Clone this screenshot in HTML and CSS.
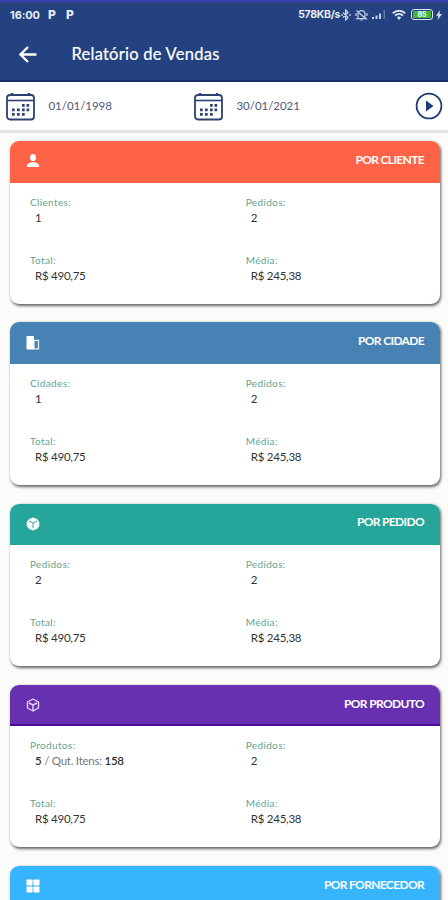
FILE: index.html
```html
<!DOCTYPE html>
<html lang="pt-BR">
<head>
	<meta charset="utf-8">
	<title>Relatório de Vendas</title>
	<link rel="stylesheet" href="styles.css">
</head>
<body>

	<header class="topbar">
		<div class="status">
			<span class="clock">16:00</span>
			<span class="notif">P</span>
			<span class="notif">P</span>
			<span class="speed">578KB/s</span>
			<svg class="st-bt" width="10" height="12" viewBox="0 0 10 12" fill="none" stroke="#c5d0e6" stroke-width="1.3"><path d="M2 3.5l5 5L4.7 11V1L7 3.5l-5 5M1 5v2M9 5v2"/></svg>
			<svg class="st-mute" width="13" height="12" viewBox="0 0 13 12" fill="none" stroke="#c5d0e6" stroke-width="1.2"><path d="M3 9V5.2a3.5 3.5 0 0 1 7 0V9l1 .7H2zM5.5 11h2M1.5 1.5l10 9M1 4v3M12 4v3"/></svg>
			<svg class="st-signal" width="14" height="11" viewBox="0 0 14 11" fill="#c5d0e6"><path d="M0 8h2v2H0zM3.5 6.5h2V10h-2zM7 4.5h2V10H7z"/><path d="M11.5 1H13v9h-1.5z" opacity=".4"/></svg>
			<svg class="st-wifi" width="14" height="12" viewBox="0 0 14 12" fill="none" stroke="#dce4f2" stroke-width="1.9"><path d="M.8 4.2a9 9 0 0 1 12.4 0M3 6.6a6 6 0 0 1 8 0"/><path d="M7 11L4.8 8.6a3.3 3.3 0 0 1 4.4 0z" fill="#dce4f2" stroke="none"/></svg>
			<span class="battery"><span class="level">85</span></span>
			<svg class="st-bolt" width="6" height="10" viewBox="0 0 6 10" fill="#dce4f2"><path d="M4.2 0L0 5.8h2.4L1.5 10 6 4H3.4z"/></svg>
		</div>
		<div class="titlebar">
			<svg width="18" height="17" viewBox="0 0 18 17" fill="none" stroke="#fff" stroke-width="2.3"><path d="M17.5 8.5H2M9 1L1.5 8.5 9 16"/></svg>
			<h1>Relatório de Vendas</h1>
		</div>
	</header>

	<svg class="defs" width="0" height="0">
		<symbol id="calendar" viewBox="0 0 29 29">
			<rect x="1" y="3" width="27" height="24.5" rx="3" fill="none" stroke="#2d4270" stroke-width="1.8"/>
			<path d="M1 8.5h27" stroke="#2d4270" stroke-width="1.6"/>
			<path d="M6 1v3M23 1v3" stroke="#2d4270" stroke-width="2.4"/>
			<path d="M16 12h2.7v2.7H16zM20.5 12h2.7v2.7h-2.7zM6 16.5h2.7v2.7H6zM11 16.5h2.7v2.7H11zM16 16.5h2.7v2.7H16zM20.5 16.5h2.7v2.7h-2.7zM6 21h2.7v2.7H6zM11 21h2.7v2.7H11zM16 21h2.7v2.7H16z" fill="#2d4270"/>
		</symbol>
	</svg>

	<div class="filter">
		<div class="date">
			<svg width="29" height="29"><use href="#calendar"/></svg>
			<span>01/01/1998</span>
		</div>
		<div class="date">
			<svg width="29" height="29"><use href="#calendar"/></svg>
			<span>30/01/2021</span>
		</div>
		<svg class="play" width="28" height="28" viewBox="0 0 28 28"><circle cx="14" cy="14" r="12.4" fill="none" stroke="#1d3a72" stroke-width="1.8"/><path d="M11 8.5l7.5 5.5-7.5 5.5z" fill="#1d3a72"/></svg>
	</div>

	<main class="cards">
		<section class="card">
			<div class="head cliente">
				<svg width="14" height="14" viewBox="0 0 14 14" fill="#fff"><ellipse cx="7" cy="3.6" rx="3" ry="3.5"/><path d="M1 13v-1.5c0-2 3-3.3 6-3.3s6 1.3 6 3.3V13z"/></svg>
				<h2>POR CLIENTE</h2>
			</div>
			<div class="body">
				<div><p class="label">Clientes:</p><p class="value">1</p></div>
				<div><p class="label">Pedidos:</p><p class="value">2</p></div>
				<div><p class="label">Total:</p><p class="value">R$ 490,75</p></div>
				<div><p class="label">Média:</p><p class="value">R$ 245,38</p></div>
			</div>
		</section>

		<section class="card">
			<div class="head cidade">
				<svg width="14" height="14" viewBox="0 0 14 14"><path d="M.5 0H8v13.5H.5z" fill="#fff"/><path d="M8 4.3h4.5v8.5H8z" fill="none" stroke="#e8f0f7" stroke-width="1.3"/></svg>
				<h2>POR CIDADE</h2>
			</div>
			<div class="body">
				<div><p class="label">Cidades:</p><p class="value">1</p></div>
				<div><p class="label">Pedidos:</p><p class="value">2</p></div>
				<div><p class="label">Total:</p><p class="value">R$ 490,75</p></div>
				<div><p class="label">Média:</p><p class="value">R$ 245,38</p></div>
			</div>
		</section>

		<section class="card">
			<div class="head pedido">
				<svg width="14" height="14" viewBox="0 0 14 14"><path d="M7 .5l4 1.5 2.3 3v4L11 12l-4 1.5L3 12 .7 9V5L3 2z" fill="#fff"/><path d="M3 4l4 2.2L11 4M7 6.2v5" fill="none" stroke="#26a69a"/></svg>
				<h2>POR PEDIDO</h2>
			</div>
			<div class="body">
				<div><p class="label">Pedidos:</p><p class="value">2</p></div>
				<div><p class="label">Pedidos:</p><p class="value">2</p></div>
				<div><p class="label">Total:</p><p class="value">R$ 490,75</p></div>
				<div><p class="label">Média:</p><p class="value">R$ 245,38</p></div>
			</div>
		</section>

		<section class="card">
			<div class="head produto">
				<svg width="14" height="14" viewBox="0 0 14 14" fill="none" stroke="#e3d5f5" stroke-width="1.4" stroke-linejoin="round"><path d="M7 1l5.5 3v6L7 13l-5.5-3V4zM3 5l4 2 4-2M7 7v6"/></svg>
				<h2>POR PRODUTO</h2>
			</div>
			<div class="body">
				<div><p class="label">Produtos:</p><p class="value"><b>5</b> <span>/ Qut. Itens:</span> <b>158</b></p></div>
				<div><p class="label">Pedidos:</p><p class="value">2</p></div>
				<div><p class="label">Total:</p><p class="value">R$ 490,75</p></div>
				<div><p class="label">Média:</p><p class="value">R$ 245,38</p></div>
			</div>
		</section>

		<section class="card">
			<div class="head fornecedor">
				<svg width="14" height="14" viewBox="0 0 14 14" fill="#fff"><rect x=".5" y=".5" width="6.1" height="6.1" rx=".8"/><rect x="7.4" y=".5" width="6.1" height="6.1" rx=".8"/><rect x=".5" y="7.4" width="6.1" height="6.1" rx=".8"/><rect x="7.4" y="7.4" width="6.1" height="6.1" rx=".8"/></svg>
				<h2>POR FORNECEDOR</h2>
			</div>
		</section>
	</main>

</body>
</html>
```

FILE: styles.css
```css
body {
	font-family: Lato, "Liberation Sans", sans-serif;
	margin: 0;
	height: 900px;
	overflow: hidden;
	background-color: #fbfbfa;
}

h1, h2, p {
	margin: 0;
}

.defs {
	display: block;
}

.topbar {
	height: 82px;
	box-sizing: border-box;
	background-color: #23427f;
	border-top: 2px solid #3b3fb0;
	border-bottom: 2px solid #12316b;
	color: #fff;
}

.status {
	display: flex;
	align-items: center;
	height: 25px;
	padding: 0 6px 0 10px;
	font-family: Inter, sans-serif;
	font-weight: 700;
	color: #e9eef8;
}

.clock {
	width: 38px;
	font-size: 11px;
	letter-spacing: -0.1px;
}

.notif {
	width: 18px;
	font-size: 12px;
	font-weight: 800;
}

.speed {
	margin-left: auto;
	font-size: 10.5px;
	letter-spacing: -0.3px;
}

.st-bt {
	margin-left: 1px;
}

.st-mute {
	margin-left: 4px;
}

.st-signal {
	margin-left: 4px;
}

.st-wifi {
	margin-left: 6px;
}

.battery {
	box-sizing: border-box;
	width: 22px;
	height: 11px;
	margin-left: 5px;
	padding: 1px;
	border: 1px solid #dce4f2;
	border-radius: 3px;
}

.level {
	display: block;
	height: 7px;
	background-color: #44b535;
	font-size: 7px;
	line-height: 7px;
	text-align: center;
	color: #fff;
}

.st-bolt {
	margin-left: 3px;
}

.titlebar {
	display: flex;
	align-items: center;
	height: 54px;
	padding-left: 19px;
}

.titlebar h1 {
	margin: -1px 0 0 34.5px;
	font-size: 16.5px;
	font-weight: 400;
	letter-spacing: 0.25px;
	-webkit-text-stroke: 0.2px #fff;
}

.filter {
	display: flex;
	align-items: center;
	height: 48px;
	padding: 0 5px 0 6px;
	background-color: #fff;
	border-bottom: 3px solid #e4e4e3;
}

.date {
	display: flex;
	align-items: center;
	width: 188px;
	font-size: 11.5px;
	letter-spacing: -0.05px;
	color: #4d5878;
}

.date span {
	margin: -2px 0 0 13.5px;
}

.play {
	margin-left: auto;
}

.cards {
	display: flex;
	flex-direction: column;
	gap: 18.8px;
	padding: 8px 8.5px 0 9.5px;
}

.card {
	flex: none;
	height: 162.5px;
	border-radius: 9px;
	background-color: #fff;
	box-shadow: 1px 1.5px 3px rgba(0, 0, 0, 0.6);
	overflow: hidden;
}

.card:last-child {
	height: 41.5px;
	border-radius: 9px 9px 0 0;
}

.head {
	display: flex;
	align-items: center;
	justify-content: space-between;
	height: 41.5px;
	box-sizing: border-box;
	padding: 0 15.5px 0 16px;
	color: #fff;
}

.head svg {
	margin-top: -1px;
}

.head h2 {
	margin-top: -5px;
	font-size: 12px;
	font-weight: 700;
	letter-spacing: -0.65px;
}

.cliente {
	background-color: #ff6347;
}

.cidade {
	background-color: #4682b4;
}

.pedido {
	background-color: #26a69a;
}

.produto {
	background-color: #6730b0;
	box-shadow: inset 0 -2px #4a0b98;
}

.fornecedor {
	background-color: #36b4fd;
}

.body {
	display: grid;
	grid-template-columns: 1fr 1fr;
	row-gap: 28px;
	padding: 12px 0 0 20.5px;
	line-height: 15px;
}

.body > div:nth-child(even) {
	padding-left: 11px;
}

.label {
	font-size: 10px;
	letter-spacing: 0.35px;
	color: #5fa391;
}

.value {
	padding-left: 5px;
	font-size: 11.5px;
	letter-spacing: -0.25px;
	color: #333;
}

.value span {
	color: #777;
}

.value b {
	font-weight: 600;
}
```
